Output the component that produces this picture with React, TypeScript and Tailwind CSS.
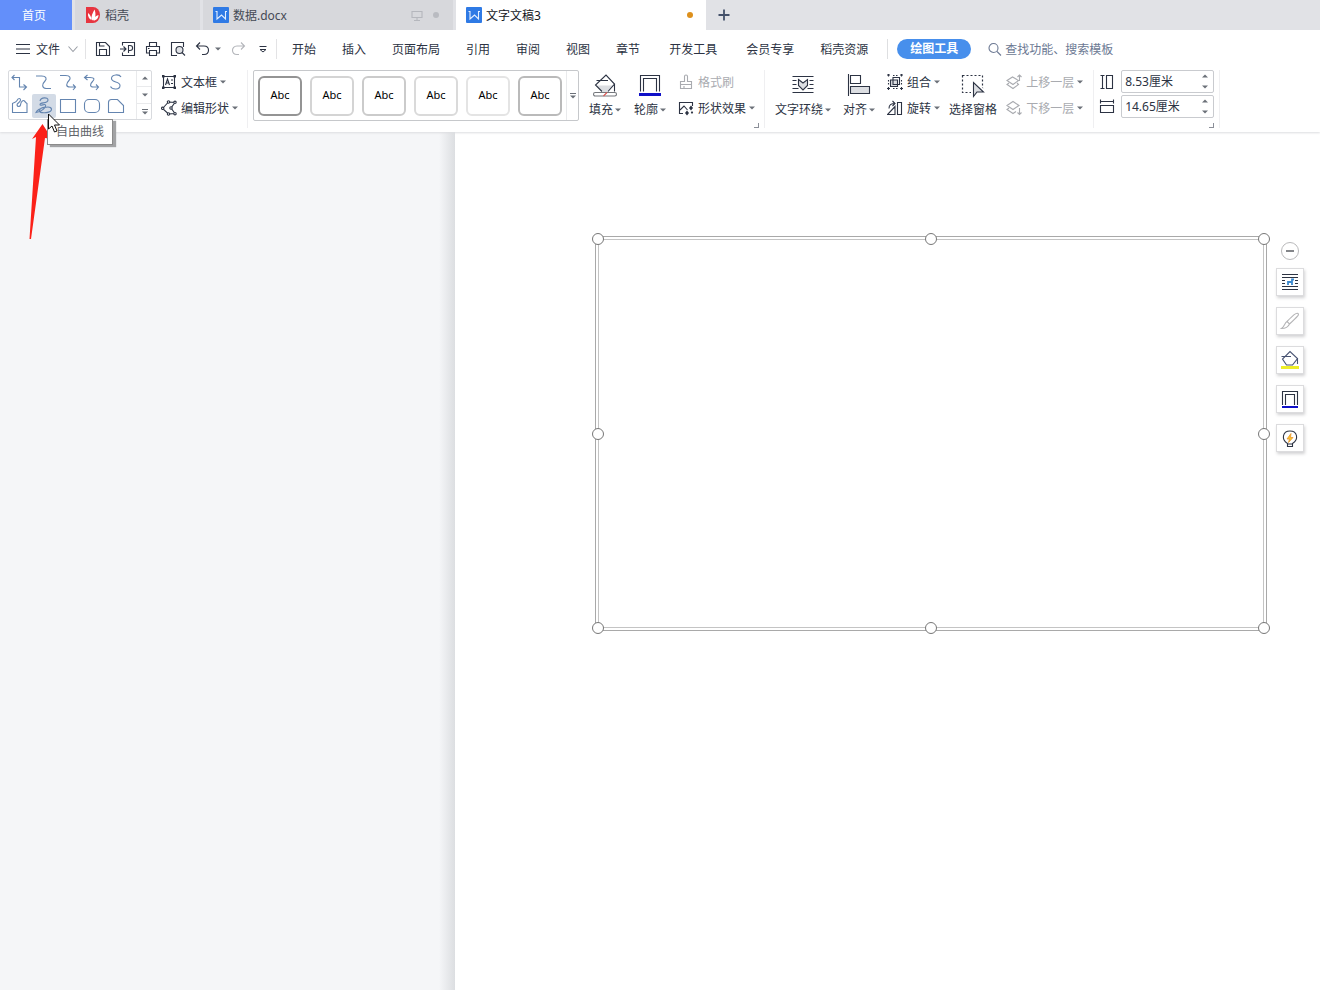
import { useState } from 'react';
import type { ReactNode } from 'react';

type IconProps = { children: ReactNode; size?: 'sm' | 'md' | 'lg'; className?: string };

const iconSizes = {
  sm: { box: 'w-4 h-4', view: 16 },
  md: { box: 'w-6 h-6', view: 24 },
  lg: { box: 'w-7 h-7', view: 28 },
};

function Icon({ children, size = 'sm', className = '' }: IconProps) {
  const s = iconSizes[size];
  return (
    <svg
      viewBox={`0 0 ${s.view} ${s.view}`}
      className={`${s.box} shrink-0 ${className}`}
      fill="none"
      stroke="currentColor"
      strokeWidth="1.1"
      aria-hidden="true"
    >
      {children}
    </svg>
  );
}

function Caret({ up = false }: { up?: boolean }) {
  return (
    <svg viewBox="0 0 6 4" className="w-1.5 h-1 shrink-0 text-[#6b7078]" aria-hidden="true">
      <path d={up ? 'M0 3.5h6L3 .5z' : 'M0 .5h6L3 3.5z'} fill="currentColor" />
    </svg>
  );
}

function MoreCaret() {
  return (
    <svg viewBox="0 0 6 6" className="w-1.5 h-1.5 text-[#6b7078]" aria-hidden="true">
      <path d="M0 .5h6" stroke="currentColor" />
      <path d="M0 2.5h6L3 5.5z" fill="currentColor" />
    </svg>
  );
}

function WpsLogo() {
  return (
    <svg viewBox="0 0 16 16" className="w-4 h-4 shrink-0" aria-hidden="true">
      <rect width="16" height="16" rx="1" fill="#2f7ae5" />
      <path d="M2.500 4.500H4V12l4.500-4 4 4V4.500H14" fill="none" stroke="#e4efff" strokeWidth="1.1" />
    </svg>
  );
}

function TabBar() {
  return (
    <div role="tablist" className="flex h-[30px] gap-[3px] bg-[#e1e2e6]">
      <button role="tab" className="w-[72px] pt-0.5 pr-1 bg-[#638ffa] text-white">首页</button>
      <button role="tab" className="flex items-center gap-1 w-[125px] px-2.5 bg-[#d7d8dc] text-[#454a55]">
        <svg viewBox="0 0 16 16" className="w-4 h-4 shrink-0" aria-hidden="true">
          <path d="M1 0h7a7 8 0 0 1 0 16H1z" fill="#e73540" />
          <path d="M8 13.500C5 12 7 7 9.500 2.500c1.500 4 1.500 8-1.500 11zM6.500 13C4 12 2.500 9 3 6c2 1.500 3.500 4 3.500 7zM8.500 13.500c.5-3 2.500-5 5-5.500 0 3-2 5.500-5 5.500z" fill="#fff" />
        </svg>
        <span className="pt-0.5">稻壳</span>
      </button>
      <button role="tab" className="flex items-center gap-1 w-[250px] px-2.5 bg-[#d7d8dc] text-[#454a55]">
        <WpsLogo />
        <span className="flex-1 pt-0.5 text-left">数据.docx</span>
        <Icon className="text-[#b5b7bd]">
          <path d="M3 4.500h10v6H3zM8 10.500v3M5 13.500h6" />
        </Icon>
        <span className="w-1.5 h-1.5 mx-1 rounded-full bg-[#b9bbc1]" />
      </button>
      <button role="tab" aria-selected="true" className="flex items-center gap-1 w-[250px] px-2.5 bg-white text-[#15181e]">
        <WpsLogo />
        <span className="flex-1 pt-0.5 text-left">文字文稿3</span>
        <span className="w-1.5 h-1.5 mr-[3px] rounded-full bg-[#dd901c]" />
      </button>
      <button aria-label="新建" className="px-[7px] text-[#44516a]">
        <Icon>
          <path d="M8 2.500v11M2.500 8h11" strokeWidth="1.800" />
        </Icon>
      </button>
    </div>
  );
}

const menuGroups = [
  ['开始', '插入', '页面布局', '引用', '审阅', '视图', '章节'],
  ['开发工具'],
  ['会员专享', '稻壳资源'],
];

function MenuBar() {
  return (
    <div className="flex items-center h-9 pt-0.5 pl-[15px] whitespace-nowrap">
      <button className="flex items-center gap-[5px]">
        <Icon><path d="M1 3.500h14M1 8h14M1 12.500h14" /></Icon>
        <span className="pt-0.5">文件</span>
        <Icon className="ml-0.5 text-[#9a9ea6]"><path d="M1.500 5.500 6 10.500l4.500-5" /></Icon>
      </button>
      <span className="w-px h-5 mr-[9px] ml-0.5 bg-[#e3e3e5]" />
      <div className="flex items-center gap-[9px]">
        <button aria-label="保存">
          <Icon><path d="M1.500 1.500h9l4 4v9h-13zM4.500 14V8.500h7V14M4.500 1.500v3.500h5" /></Icon>
        </button>
        <button aria-label="输出为PDF">
          <Icon><path d="M2.500 4.500v-3h12v13h-12v-3M0 8h6M3.500 5.500 6 8l-2.500 2.500M8.500 12V4.500h1.500c3.500 0 3.500 5 0 5H8.500" /></Icon>
        </button>
        <button aria-label="打印">
          <Icon><path d="M4.500 5V1.500h7V5M4 12H1.500V5.500h13V12H12M4.500 9.500h7v5h-7zM3 7.500h1.500" /></Icon>
        </button>
        <button aria-label="打印预览">
          <Icon>
            <path d="M7 14.500H1.500v-13h12V6" />
            <circle cx="9.500" cy="9" r="3.500" fill="#dfe1e5" />
            <path d="m12 11.500 3 3" />
          </Icon>
        </button>
        <button aria-label="撤销" className="flex items-center gap-1">
          <Icon><path d="M5 1.500 1.500 5 5 8.500M1.500 5H9c6 0 6 8.500 0 8.500H7" /></Icon>
          <Caret />
        </button>
        <button aria-label="恢复" className="text-[#b4b6bb]">
          <Icon><path d="m11 1.500 3.500 3.500L11 8.500M14.500 5H7c-6 0-6 8.500 0 8.500h2" /></Icon>
        </button>
        <button aria-label="自定义快速访问工具栏">
          <Icon><path d="M4.500 5.500h7M5 8.500l3 2.500 3-2.500z" strokeWidth="1" /></Icon>
        </button>
      </div>
      <span className="w-px h-5 ml-[5px] mr-0.5 bg-[#e3e3e5]" />
      <nav className="flex gap-[3px] pt-0.5">
        {menuGroups.map((group) => (
          <div key={group[0]} className="flex">
            {group.map((item) => (
              <button key={item} className="px-[13px]">{item}</button>
            ))}
          </div>
        ))}
      </nav>
      <span className="w-px h-5 ml-1.5 mr-[9px] bg-[#dedfe1]" />
      <button className="h-5 w-[74px] rounded-full bg-[#478fec] text-white font-bold leading-5">绘图工具</button>
      <label className="flex items-center flex-1 gap-0.5 ml-4 text-[#6c7993]">
        <Icon><circle cx="6.500" cy="7" r="4.500" /><path d="m10 10.500 4 4" /></Icon>
        <input
          type="text"
          placeholder="查找功能、搜索模板"
          className="flex-1 min-w-0 pt-0.5 outline-none placeholder:text-[#6c7993]"
        />
      </label>
    </div>
  );
}

const shapes = [
  { name: '肘形双箭头连接符', art: <path d="M4 7.500h7.500v9.500H18M6.500 5 4 7.500 6.500 10M15.500 14.500 18.500 17l-3 3" /> },
  { name: '曲线连接符', art: <path d="M4 6h5.500c5 0 5.500 3 3.500 5-3 3-3.500 7 1 7.500h5" /> },
  { name: '曲线箭头连接符', art: <path d="M4 5.500h5.500c5 0 5.500 3 3.500 5C10 13.500 9.500 17 14 17h5.500M17 14.500l2.500 2.500-2.500 3" /> },
  { name: '曲线双箭头连接符', art: <path d="M4.500 7.500H10c5 0 4.500 2 2.500 4-2.500 2.500-3 5.500 1 5.500H18.500M7.500 5l-3 2.500 3 2.500M16 14.500l2.500 2.500-2.500 3" /> },
  { name: '曲线', art: <path d="M17 7c-1.500-3-9.500-3-9.500 1.500C7.500 13 16 11 16 15.500c0 4.500-7.500 4.500-9.500 1" /> },
  { name: '任意多边形', art: <path d="M4.500 18.500V9.500C5.500 8.500 7.500 9 9 6.500 10 4 12.500 4 12.500 6c0 2.500-3.500 3-3.500 5 .5 2 3 2 3.500 0 .5-4.500 3-5 4-4 1 1 1.500 2 2.500 2.500v9z" /> },
  { name: '自由曲线', art: <path d="M8 7c1-4 8-4 8-1 0 4-8 2-8 4.500 0 2 5-1 5.500.5 1 2-4 7-9.500 7.500 2-4.500 14.500-7.500 15.500-3.500.5 4-11 5-12 2-.5-2 3-4 6-3.500" /> },
  { name: '矩形', art: <path d="M4.500 5.500h15v13h-15z" /> },
  { name: '圆角矩形', art: <rect x="4.500" y="5.500" width="15" height="13" rx="4.500" /> },
  { name: '剪去单角的矩形', art: <path d="M4.500 18.500V8.500c0-2 1-3 3-3h6l6 6v7z" /> },
];

function ShapeGallery() {
  const [active, setActive] = useState('自由曲线');
  return (
    <div className="relative flex h-[50px] w-36 shrink-0">
      <div className="flex w-full outline outline-[#d8dade] -outline-offset-1 rounded-xs">
        <div className="grid grid-cols-5 content-start flex-1">
          {shapes.map((shape) => (
            <button
              key={shape.name}
              aria-label={shape.name}
              onClick={() => setActive(shape.name)}
              className="flex justify-center h-6 px-px text-[#6485b0]"
            >
              <span className={`rounded-xs ${active === shape.name ? 'bg-[#d3dbe6]' : ''}`}>
                <Icon size="md">{shape.art}</Icon>
              </span>
            </button>
          ))}
        </div>
        <div className="flex flex-col w-4 ml-2 border-l border-[#e9eaec] divide-y divide-[#e9eaec]">
          <button aria-label="上一行" className="flex flex-1 items-center justify-center"><Caret up /></button>
          <button aria-label="下一行" className="flex flex-1 items-center justify-center"><Caret /></button>
          <button aria-label="其他形状" className="flex flex-1 items-center justify-center"><MoreCaret /></button>
        </div>
      </div>

      {/* pointer arrow, tooltip and cursor float over the ribbon and the canvas */}
      <svg viewBox="0 0 24 118" className="absolute left-5 top-[54px] w-6 h-[118px]" aria-hidden="true">
        <path d="M14.500 0 24 15l-7-1L3 115H1.500L8 13l-4 2z" fill="#fb2119" />
      </svg>
      <div role="tooltip" className="absolute left-[39px] top-[49px] h-[26px] px-2 border border-[#8b8b8b] bg-white text-[#62656a] leading-6 whitespace-nowrap shadow-[3px_2px_1px_#a2a3a5]">
        自由曲线
      </div>
      <svg viewBox="0 0 13 20" className="absolute left-10 top-[43px] w-[13px] h-5" aria-hidden="true">
        <path d="M.5 1v15l3.500-3 2.500 6 2.500-1-2.500-6h5z" fill="#fff" stroke="#111" />
      </svg>
    </div>
  );
}

function RowButton({ icon, label, caret = true, muted = false }: { icon: ReactNode; label: string; caret?: boolean; muted?: boolean }) {
  return (
    <button disabled={muted} className={`flex items-center h-6 ${muted ? 'text-[#a9abb0]' : ''}`}>
      <Icon>{icon}</Icon>
      <span className="ml-1 mr-[3px] pt-0.5">{label}</span>
      {caret && <Caret />}
    </button>
  );
}

function BigButton({ icon, label, caret = true }: { icon: ReactNode; label: string; caret?: boolean }) {
  return (
    <button className="flex flex-col items-center gap-[3px] pt-px">
      <Icon size="lg">{icon}</Icon>
      <span className="flex items-center gap-0.5 leading-4">
        {label}
        {caret && <Caret />}
      </span>
    </button>
  );
}

function Launcher() {
  return (
    <button aria-label="更多设置" className="absolute right-0 bottom-1 w-[5px] h-[5px] border-r border-b border-[#8b8f98]" />
  );
}

const styleBorders = ['border-[#949494]', 'border-[#d4d4d4]', 'border-[#cbcbcb]', 'border-[#dadada]', 'border-[#e4e4e4]', 'border-[#bababa]'];

function StyleGallery() {
  return (
    <div className="flex items-center h-[51px] border border-[#c6c8cb] rounded-xs pl-1 shrink-0">
      <div className="flex gap-2">
        {styleBorders.map((border) => (
          <button key={border} className={`w-11 h-10 border-2 rounded-md text-[11px] text-black ${border}`}>Abc</button>
        ))}
      </div>
      <button aria-label="更多样式" className="flex items-center justify-center self-stretch w-3 ml-1 border-l border-[#e9eaec]">
        <MoreCaret />
      </button>
    </div>
  );
}

function SizeField({ id, label, value, icon }: { id: string; label: string; value: string; icon: ReactNode }) {
  return (
    <div className="flex items-center gap-1.5">
      <label htmlFor={id} aria-label={label}><Icon>{icon}</Icon></label>
      <div className="flex w-[93px] h-[23px] border border-[#c9cbcf] rounded-xs">
        <input id={id} type="text" defaultValue={value} className="flex-1 min-w-0 pl-[3px] outline-none" />
        <div className="flex flex-col w-4">
          <button aria-label={`增加${label}`} className="flex flex-1 items-center justify-center"><Caret up /></button>
          <button aria-label={`减少${label}`} className="flex flex-1 items-center justify-center"><Caret /></button>
        </div>
      </div>
    </div>
  );
}

function Divider() {
  return <span className="w-px h-[58px] shrink-0 bg-[#efeff1]" />;
}

function Ribbon() {
  return (
    <div className="flex items-start h-[66px] pt-1 pl-2 whitespace-nowrap">
      <ShapeGallery />
      <div className="flex flex-col items-start gap-0.5 px-[9px]">
        <RowButton
          label="文本框"
          icon={
            <>
              <path d="M2.500 2.500h11v11h-11z" />
              <path d="M1 1h2.500v2.500H1zM12.500 1H15v2.500h-2.500zM1 12.500h2.500V15H1zM12.500 12.500H15V15h-2.500z" fill="#2c3343" stroke="none" />
              <path d="M4.500 11 6.500 5l2 6M5 9h3M10 6h2M10 9.500h2" />
            </>
          }
        />
        <RowButton
          label="编辑形状"
          icon={
            <>
              <path d="M1.500 8.500 7.500 2l6.500.5L10 8l4 5.500-6.500.5z" />
              <g fill="#fff">
                <circle cx="1.700" cy="8.300" r="1.200" />
                <circle cx="7.500" cy="2" r="1.200" />
                <circle cx="14" cy="2.300" r="1.200" />
                <circle cx="10" cy="8" r="1.200" />
                <circle cx="14" cy="13.700" r="1.200" />
                <circle cx="7.500" cy="14" r="1.200" />
              </g>
            </>
          }
        />
      </div>
      <Divider />
      <div className="pl-[5px]">
        <StyleGallery />
      </div>

      <div className="relative flex gap-3 h-[62px] pl-2.5 mr-[5px]">
        <div className="flex items-start gap-[13px]">
          <BigButton
            label="填充"
            icon={
              <>
                <path d="M5 14.500h18l-7 6.500H12z" fill="#dcdee2" stroke="none" />
                <path d="M11 20.500 4.500 14 15 4l8.500 9-6.500 7.500M23.500 12.500v8M5.500 9.500H17" />
                <rect x="2.500" y="21.500" width="23" height="3.500" rx="1.700" stroke="#74777c" />
                <path d="m12.500 25 3.500-3.500" stroke="#d9534f" />
              </>
            }
          />
          <BigButton
            label="轮廓"
            icon={
              <>
                <path d="M4.500 20.500v-16h19v16M7.500 20.500v-13h13v13" />
                <path d="M3 23.500h22" stroke="#1010c8" strokeWidth="3" />
              </>
            }
          />
        </div>
        <div className="flex flex-col items-start gap-0.5 pr-1">
          <RowButton
            label="格式刷"
            caret={false}
            muted
            icon={<path d="M6.500 7.500v-5c0-2 3-2 3 0v5h4v7h-11v-7zM2.500 10.500h11M6 14v-2" />}
          />
          <RowButton
            label="形状效果"
            icon={
              <>
                <path d="M5 13.500H1.500v-11h13V6M2 10l4-4 3.500 4" />
                <path d="m13 5.500 2 2.500-2 2.500L11 8zM9 10.500l2 2.500-2 2.500L7 13zM14 11l1.200 1.500L14 14l-1.200-1.500z" fill="#2c3343" stroke="none" />
              </>
            }
          />
        </div>
        <Launcher />
      </div>
      <Divider />

      <div className="flex items-start gap-[9px] px-2.5">
        <div className="flex items-start gap-3">
          <BigButton
            label="文字环绕"
            icon={
              <>
                <path d="M3.500 5.500h21M3.500 9.500h4M20.500 9.500h4M3.500 13.500h4M20.500 13.500h4M3.500 17.500h6M18.500 17.500h6M3.500 21.500h21" />
                <path d="m9.500 8.500 4.500 3.500 4.500-3.500v6L14 19l-4.500-4.500z" fill="#dcdee2" />
              </>
            }
          />
          <BigButton
            label="对齐"
            icon={
              <>
                <path d="M3.500 3v22" />
                <path d="M5.500 4.500h10v8h-10z" />
                <path d="M5.500 15.500h19v7h-19z" fill="#dcdee2" />
              </>
            }
          />
          <div className="flex flex-col items-start gap-0.5">
            <RowButton
              label="组合"
              icon={
                <>
                  <path d="M3.500 6h7v6.500h-7z" fill="#dcdee2" />
                  <path d="M6 3.500h6.500v7H6z" />
                  <path d="M0 1h3M1.500 0v2.500M6 1.500h1.500M9 1.500h1.500M13 1h3M14.500 0v2.500M1.500 6v1.500M1.500 9v1.500M14.500 6v1.500M14.500 9v1.500M0 14.500h3M1.500 13v3M6 14.500h1.500M9 14.500h1.500M13 14.500h3M14.500 13v3" />
                </>
              }
            />
            <RowButton label="旋转" icon={<path d="M10.500 2.500h4v12h-4zM8 6.500v8H.5zM2 8.500C2 5 4 3.500 8 3.500M5.500 1 8 3.500 5.500 6" />} />
          </div>
        </div>
        <BigButton
          label="选择窗格"
          caret={false}
          icon={
            <>
              <path d="M3.500 4.500h20v17h-20z" strokeDasharray="2 2" strokeWidth="1.200" />
              <path d="M14 11v14l3.500-4H25z" fill="#dcdee2" stroke="#fff" strokeWidth="4" />
              <path d="M14.500 11.500v14l3.500-4.500h6.500z" fill="#dcdee2" />
            </>
          }
        />
        <div className="flex flex-col items-start gap-0.5">
          <RowButton
            label="上移一层"
            muted
            icon={<path d="M1 6.500 6.500 3l6 3.500L7 10.500zM3 9l-2 1.500L7 14.500l5.500-4L11 9M13.500 7V1M11.500 3l2-2 2 2" />}
          />
          <RowButton
            label="下移一层"
            muted
            icon={<path d="M1 5.500 7 1.500l6 4-6 4zM3 8l-2 1.500 6 4 3-2M13.500 8v6.500M11.500 12.500l2 2 2-2" />}
          />
        </div>
      </div>
      <Divider />

      <div className="relative flex flex-col gap-0.5 h-[62px] ml-[5px] mr-[5px]">
        <SizeField id="shape-height" label="高度" value="8.53厘米" icon={<path d="M3.500 1.500v13M1.500 1.500h4M1.500 14.500h4M7.500 1.500h6v13h-6z" />} />
        <SizeField id="shape-width" label="宽度" value="14.65厘米" icon={<path d="M1.500 2.500h13M1.500 .5v4M14.500 .5v4M1.500 6.500h13v7h-13z" />} />
        <Launcher />
      </div>
      <Divider />
    </div>
  );
}

const handles = [
  'left-0 top-0', 'left-1/2 top-0', 'left-full top-0',
  'left-0 top-1/2', 'left-full top-1/2',
  'left-0 top-full', 'left-1/2 top-full', 'left-full top-full',
];

const floatTools = [
  {
    name: '布局选项',
    art: (
      <>
        <path d="M4 4.500h16M4 7.500h16M4 10.500h3M17 10.500h3M4 13.500h3M17 13.500h3M4 16.500h16M4 19.500h16" />
        <path d="M10 15v-3h4v3M14 12V9.500h2" stroke="#3b8ad0" strokeWidth="1.800" />
      </>
    ),
  },
  {
    name: '格式刷',
    art: <path d="M20 4.500c1.500 1-.5 3-8.500 10.500L9 12.500c6-6 9.500-9.500 11-8zM9 12.500c-2.500 1.500-2.500 5-5.500 7 3.500 0 6.500-1 8-4.500" stroke="#b4b4b6" />,
  },
  {
    name: '填充',
    art: (
      <>
        <path d="M8.500 17 4.500 11 12 3.500l7.500 7-5 6.500zM19.500 10v6M3.500 8.500H13" stroke="#485372" />
        <path d="M3 19.500h18" stroke="#eeee28" strokeWidth="3" />
      </>
    ),
  },
  {
    name: '轮廓',
    art: (
      <>
        <path d="M4.500 18V4.500h15V18M7.500 18V7.500h9V18" />
        <path d="M4 20h16" stroke="#1010c8" strokeWidth="2" />
      </>
    ),
  },
  {
    name: '智能推荐',
    art: (
      <>
        <path d="M9.500 17.500C3 13.500 4.500 5 12 5s9 8.500 2.500 12.500v3h-5zM9.500 18h5" />
        <path d="m13 7.500-4 5.500h2.500l-1 3.500 4.500-5h-2.500z" fill="#fbc32d" stroke="#e7962c" strokeWidth=".8" />
      </>
    ),
  },
];

function Canvas() {
  return (
    <main className="flex flex-1 bg-white">
      <div className="flex justify-end w-[455px] shrink-0 bg-[#f5f6f8]">
        <div className="w-4 bg-linear-to-r from-[#f5f6f8] to-[#dcdee1]" />
      </div>
      <div className="flex flex-1 items-start gap-[9px] pt-[104px] pl-[140px] pr-4">
        <div className="flex-1 h-[395px] p-0.5 border border-[#a9a9a9]">
          <div className="relative h-full outline outline-[#c4c4c4] -outline-offset-1">
            {handles.map((pos) => (
              <span key={pos} className={`absolute w-3 h-3 -translate-1/2 rounded-full border border-[#777] bg-white ${pos}`} />
            ))}
          </div>
        </div>
        <div className="flex flex-col items-center gap-[11px] w-7 pt-1.5">
          <button aria-label="收起" className="-mb-[3px] text-[#77797d]">
            <svg viewBox="0 0 18 18" className="w-[18px] h-[18px]" fill="none" aria-hidden="true">
              <circle cx="9" cy="9" r="8.500" stroke="#b9b9bb" />
              <path d="M5 9h8" stroke="currentColor" strokeWidth="1.800" />
            </svg>
          </button>
          {floatTools.map((tool) => (
            <button
              key={tool.name}
              aria-label={tool.name}
              className="flex items-center justify-center w-7 h-7 border border-[#dcdcde] bg-white shadow-[1px_2px_3px_#d2d2d4]"
            >
              <Icon size="md">{tool.art}</Icon>
            </button>
          ))}
        </div>
      </div>
    </main>
  );
}

export default function App() {
  return (
    <div className="flex flex-col min-h-screen overflow-x-hidden bg-white font-['Noto_Sans','Noto_Sans_CJK_SC',sans-serif] text-xs text-[#2c3343]">
      <header className="relative z-10 bg-white shadow-[0_1px_2px_#dcdde0]">
        <TabBar />
        <MenuBar />
        <Ribbon />
      </header>
      <Canvas />
    </div>
  );
}
